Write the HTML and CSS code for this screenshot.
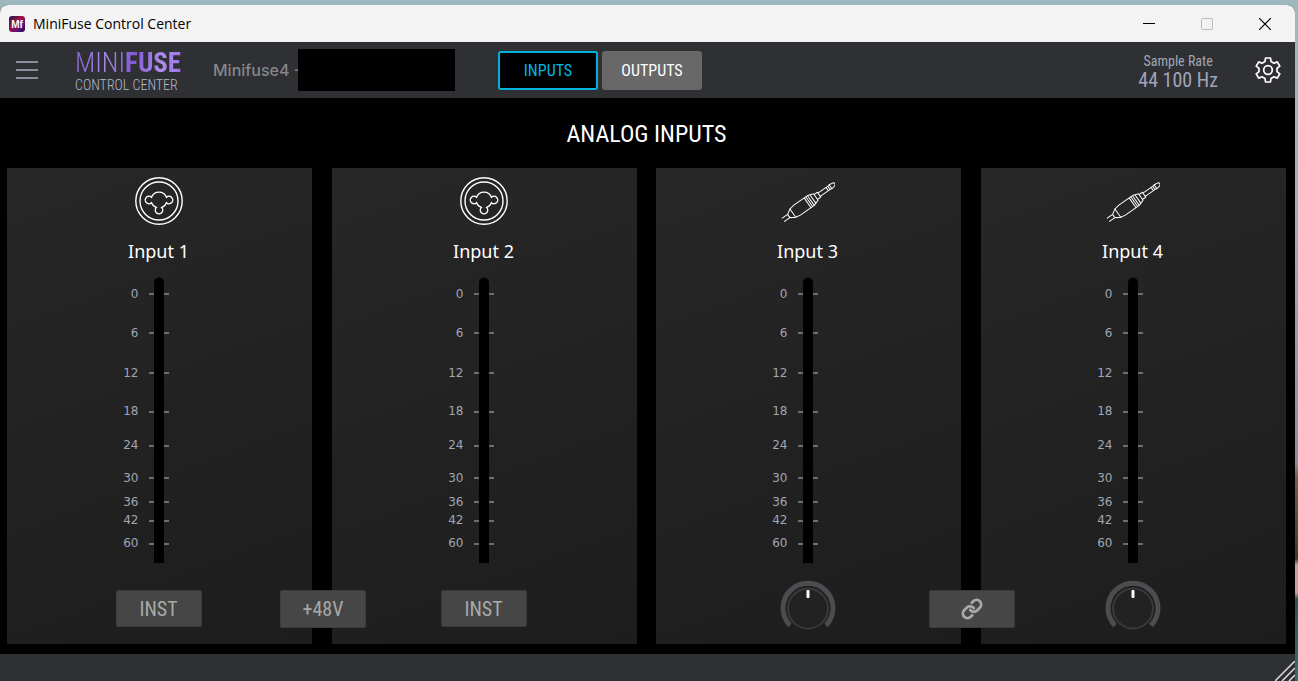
FILE: index.html
```html
<!DOCTYPE html>
<html lang="en">
<head>
  <meta charset="UTF-8">
  <meta name="viewport" content="width=device-width, initial-scale=1.0">
  <title>MiniFuse Control Center</title>
  <link rel="stylesheet" href="styles.css">
</head>
<body>
  <!-- shared icons -->
  <svg class="defs" width="0" height="0">
    <symbol id="combo" viewBox="0 0 48 48">
      <g fill="none" stroke="#fff" stroke-width="1.4">
        <circle cx="24" cy="24" r="23.2"/>
        <circle cx="24" cy="24" r="19"/>
        <path d="M16.500 20.300A8 8 0 0 1 31.500 20.300A3.700 3.700 0 1 1 31.500 25.700A8 8 0 0 1 26.700 30.500A3.700 3.700 0 1 1 21.300 30.500A8 8 0 0 1 16.500 25.700A3.700 3.700 0 1 1 16.500 20.300Z"/>
      </g>
    </symbol>
    <symbol id="jack" viewBox="0 0 54 40">
      <g fill="none" stroke="#fff" stroke-width="1" transform="translate(2 39) rotate(-35)">
        <path d="M0 -2H7M0 2H7M7 -2L12 -5V5L7 2Z"/>
        <path d="M12 -5L17 -6H34V6H17L12 5"/>
        <path d="M30 -6V6M32 -6V6M34 -6L40 -4V4L34 6M36.500 -5V5M40 -3H44V3H40M44 -2H58M44 2H58M54 -2V2M56 -2V2M58 -2.500L63 -1.500V1.500L58 2.500Z"/>
      </g>
    </symbol>
    <symbol id="meter" viewBox="0 0 22 286">
      <path d="M1 17H21M1 56H21M1 96H21M1 135H21M1 169H21M1 201H21M1 225H21M1 244H21M1 267H21" stroke="#848890" stroke-width="1.300"/>
      <path d="M6 286V6A5 5.500 0 0 1 16 6V286Z"/>
    </symbol>
    <symbol id="dial" viewBox="0 0 56 56">
      <path d="M10 45.500A25 25 0 1 1 46 45.500" fill="none" stroke="#4d4c51" stroke-width="5"/>
      <circle cx="28" cy="28.500" r="20" fill="#222" stroke="#3a3a3a" stroke-width="2"/>
      <rect x="26.500" y="10" width="3" height="8" rx="1" fill="#fff"/>
    </symbol>
  </svg>

  <div class="window">
    <header class="titlebar">
      <svg class="app-icon" viewBox="0 0 16 16">
        <defs>
          <linearGradient id="app" x1="0" y1="0" x2="1" y2="1">
            <stop offset="0" stop-color="#101a50"/>
            <stop offset=".4" stop-color="#a0103c"/>
            <stop offset=".7" stop-color="#64107c"/>
            <stop offset="1" stop-color="#240a3c"/>
          </linearGradient>
        </defs>
        <rect width="16" height="16" rx="3" fill="url(#app)"/>
        <text x="8" y="12" text-anchor="middle">Mf</text>
      </svg>
      <h1 class="window-title">MiniFuse Control Center</h1>
      <div class="window-controls">
        <button aria-label="Minimize"><svg viewBox="0 0 12 12"><path d="M0 5.500H12" stroke="#000"/></svg></button>
        <button aria-label="Maximize" disabled><svg viewBox="0 0 12 12"><rect x=".5" y=".5" width="11" height="11" rx="1" fill="none" stroke="#bbb"/></svg></button>
        <button aria-label="Close"><svg viewBox="0 0 12 12"><path d="M0 0L12 12M12 0L0 12" stroke="#000" stroke-width="1.200"/></svg></button>
      </div>
    </header>

    <nav class="toolbar">
      <div class="toolbar-left">
        <button class="menu" aria-label="Menu"><svg viewBox="0 0 22 18"><path d="M0 1H22M0 9H22M0 17H22" stroke="#a5acba" stroke-width="1.500"/></svg></button>
        <div class="logo">
          <div class="logo-name">MINI<b>FUSE</b></div>
          <div class="logo-sub">CONTROL CENTER</div>
        </div>
        <div class="device">Minifuse4 -</div>
        <div class="serial"></div>
      </div>
      <div class="tabs">
        <button class="tab active">INPUTS</button>
        <button class="tab">OUTPUTS</button>
      </div>
      <div class="sample-rate">
        <div class="rate-label">Sample Rate</div>
        <div class="rate-value">44 100 Hz</div>
      </div>
      <button class="settings" aria-label="Settings">
        <svg viewBox="0 0 26 26" fill="none" stroke="#fff" stroke-width="1.700" stroke-linejoin="round">
          <circle cx="13" cy="13" r="4.300"/>
          <path d="M10.500 1H15.500L16 4.500L19 6.200L22.300 4.900L24.800 9.200L22 11.400V14.600L24.800 16.800L22.300 21.100L19 19.800L16 21.500L15.500 25H10.500L10 21.500L7 19.800L3.700 21.100L1.200 16.800L4 14.600V11.400L1.200 9.200L3.700 4.900L7 6.200L10 4.500Z"/>
        </svg>
      </button>
    </nav>

    <main class="inputs">
      <h2 class="heading">ANALOG INPUTS</h2>
      <div class="pairs">
        <div class="pair">
          <section class="panel">
            <svg class="combo"><use href="#combo"/></svg>
            <h3 class="name">Input 1</h3>
            <div class="meter">
              <ol class="scale"><li>0</li><li>6</li><li>12</li><li>18</li><li>24</li><li>30</li><li>36</li><li>42</li><li>60</li></ol>
              <svg class="bar"><use href="#meter"/></svg>
            </div>
            <button class="toggle">INST</button>
          </section>
          <section class="panel">
            <svg class="combo"><use href="#combo"/></svg>
            <h3 class="name">Input 2</h3>
            <div class="meter">
              <ol class="scale"><li>0</li><li>6</li><li>12</li><li>18</li><li>24</li><li>30</li><li>36</li><li>42</li><li>60</li></ol>
              <svg class="bar"><use href="#meter"/></svg>
            </div>
            <button class="toggle">INST</button>
          </section>
          <button class="toggle shared">+48V</button>
        </div>

        <div class="pair">
          <section class="panel">
            <svg class="jack"><use href="#jack"/></svg>
            <h3 class="name">Input 3</h3>
            <div class="meter">
              <ol class="scale"><li>0</li><li>6</li><li>12</li><li>18</li><li>24</li><li>30</li><li>36</li><li>42</li><li>60</li></ol>
              <svg class="bar"><use href="#meter"/></svg>
            </div>
            <label class="knob">
              <svg><use href="#dial"/></svg>
              <input type="range" aria-label="Input 3 gain">
            </label>
          </section>
          <section class="panel">
            <svg class="jack"><use href="#jack"/></svg>
            <h3 class="name">Input 4</h3>
            <div class="meter">
              <ol class="scale"><li>0</li><li>6</li><li>12</li><li>18</li><li>24</li><li>30</li><li>36</li><li>42</li><li>60</li></ol>
              <svg class="bar"><use href="#meter"/></svg>
            </div>
            <label class="knob">
              <svg><use href="#dial"/></svg>
              <input type="range" aria-label="Input 4 gain">
            </label>
          </section>
          <button class="toggle shared" aria-label="Link">
            <svg viewBox="0 0 24 24" fill="none" stroke="#a9a9a9" stroke-width="3" stroke-linecap="round" stroke-linejoin="round">
              <path d="M10 13a5 5 0 0 0 7.540.540l3-3a5 5 0 0 0-7.070-7.070l-1.720 1.710"/>
              <path d="M14 11a5 5 0 0 0-7.540-.540l-3 3a5 5 0 0 0 7.070 7.070l1.710-1.710"/>
            </svg>
          </button>
        </div>
      </div>
    </main>

    <footer class="statusbar">
      <svg class="grip" viewBox="0 0 20 20"><path d="M0 20L20 0M7 20L20 7M14 20L20 14" stroke="#ddd" stroke-width="1.500"/></svg>
    </footer>
  </div>
</body>
</html>
```
FILE: styles.css
```css
* {
  margin: 0;
  padding: 0;
  box-sizing: border-box;
}

body {
  min-height: 100vh;
  padding: 5px 3px 0 0;
  display: flex;
  background: linear-gradient(#9cb8be 0%, #9cb0ba 30%, #8f8b96 68%, #6f6350 70%, #3c3b25 82%, #c0a39b 83%, #c0a39b 87%, #2c544f 88%, #3c6a70 100%);
  font-family: "Roboto Condensed", "Liberation Sans Narrow", Roboto, sans-serif;
}

button {
  border: none;
  background: none;
  font-family: inherit;
}

svg {
  display: block;
}

.defs {
  position: absolute;
}

.window {
  flex: 1;
  display: flex;
  flex-direction: column;
  border-radius: 8px 8px 0 0;
  overflow: hidden;
  background: #000;
}

.titlebar {
  height: 37px;
  padding-left: 9px;
  display: flex;
  align-items: center;
  gap: 8px;
  background: #f3f3f3;
}

.app-icon {
  width: 16px;
  height: 16px;
}

.app-icon text {
  fill: #fff;
  font: bold 10px "Liberation Sans", sans-serif;
}

.window-title {
  flex: 1;
  font: 14px "Open Sans", sans-serif;
  color: #000;
}

.window-controls {
  display: flex;
  padding-right: 1px;
}

.window-controls button {
  width: 58px;
  height: 37px;
  display: flex;
  align-items: center;
  justify-content: center;
}

.window-controls svg {
  width: 12px;
  height: 12px;
}

.toolbar {
  height: 56px;
  padding: 0 14px 0 16px;
  display: flex;
  align-items: center;
  background: #2f3034;
}

.toolbar-left {
  width: 482px;
  display: flex;
  align-items: center;
}

.menu svg {
  width: 22px;
  height: 18px;
}

.logo {
  margin-left: 37px;
  width: 138px;
  padding-top: 2px;
  white-space: nowrap;
}

.logo-name {
  width: max-content;
  font-size: 27px;
  font-weight: 300;
  line-height: 28px;
  background: linear-gradient(100deg, #8a63d8, #a98ae8 30%, #8058d4 55%, #b08cf0 80%, #9a74e6);
  -webkit-background-clip: text;
  background-clip: text;
  color: transparent;
}

.logo-name b {
  font-weight: 700;
}

.logo-sub {
  font-size: 14px;
  font-weight: 300;
  line-height: 16px;
  color: #b4bac6;
}

.device {
  width: 85px;
  font: 500 16px Inter, sans-serif;
  color: #85868a;
  white-space: nowrap;
}

.serial {
  width: 157px;
  height: 42px;
  background: #000;
}

.tabs {
  display: flex;
  gap: 4px;
}

.tab {
  width: 100px;
  height: 39px;
  border-radius: 3px;
  background: #686868;
  color: #fff;
  font-size: 16px;
}

.tab.active {
  border: 2px solid #00b1db;
  background: #000;
  color: #00b8e6;
}

.sample-rate {
  margin-left: auto;
  margin-right: 37px;
  padding-top: 2px;
  text-align: center;
  color: #a0a6b4;
}

.rate-label {
  font-size: 14px;
  line-height: 18px;
}

.rate-value {
  font-size: 20px;
  line-height: 20px;
}

.settings svg {
  width: 26px;
  height: 26px;
}

.inputs {
  flex: 1;
  padding: 0 9px 10px 7px;
  display: flex;
  flex-direction: column;
}

.heading {
  padding: 21px 0 19px;
  text-align: center;
  font-size: 24px;
  font-weight: normal;
  line-height: 30px;
  color: #fff;
}

.pairs {
  flex: 1;
  display: flex;
  gap: 19px;
}

.pair {
  flex: 1;
  display: flex;
  gap: 20px;
  position: relative;
}

.panel {
  flex: 1;
  padding: 9px 2px 0 0;
  display: flex;
  flex-direction: column;
  align-items: center;
  background: linear-gradient(160deg, #272727, #1d1d1d);
}

.combo,
.jack {
  width: 48px;
  height: 48px;
}

.jack {
  width: 54px;
}

.name {
  padding: 12px 0;
  font: 18px/28px "Noto Sans", sans-serif;
  color: #fff;
}

.meter {
  display: grid;
  grid-template-columns: 60px 22px 60px;
}

.scale {
  padding: 7px 9px 0 0;
  display: grid;
  grid-template-rows: 39px 40px 38px 34px 33px 24px 18px 23px 20px;
  list-style: none;
  text-align: right;
  font: 12px/20px "DejaVu Sans", sans-serif;
  color: #a0a6b4;
}

.bar {
  width: 22px;
  height: 286px;
}

.toggle {
  width: 86px;
  height: 37px;
  margin-top: 27px;
  border: 1px solid #3c3c3c;
  border-radius: 2px;
  background: #464646;
  color: #a9a9a9;
  font-size: 20px;
}

/* sits over the gap between the two panels */
.shared {
  position: absolute;
  left: calc(50% + 1px);
  bottom: 16px;
  height: 38px;
  transform: translateX(-50%);
}

.shared svg {
  width: 22px;
  height: 22px;
  margin: 0 auto;
}

.knob {
  margin-top: 17px;
  position: relative;
}

.knob svg {
  width: 56px;
  height: 56px;
}

.knob input {
  position: absolute;
  inset: 0;
  width: 100%;
  opacity: 0;
}

.statusbar {
  height: 27px;
  display: flex;
  align-items: flex-end;
  justify-content: flex-end;
  background: #2f3034;
}

.grip {
  width: 20px;
  height: 20px;
}
```
